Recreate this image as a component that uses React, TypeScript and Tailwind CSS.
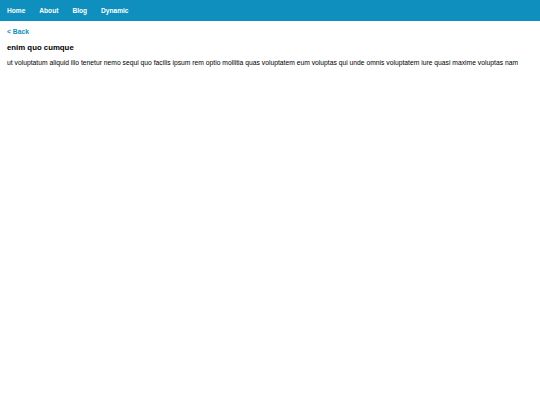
export default function App() {
  const links = ["Home", "About", "Blog", "Dynamic"];
  return (
    <div className="min-h-[405px] bg-white font-['Liberation_Sans',Arial,sans-serif]">
      <nav className="flex h-[21px] items-center gap-[14px] bg-[#0e8fbd] px-[7px]">
        {links.map((l) => (
          <a key={l} href="#" className="text-[6.6px] font-bold text-white">
            {l}
          </a>
        ))}
      </nav>
      <div className="px-[7px] pt-[6px]">
        <a href="#" className="block text-[6.8px] font-bold leading-[10px] text-[#0e8fbd]">
          &lt; Back
        </a>
        <h1 className="mt-[5px] text-[7.8px] font-bold leading-[11px] text-black">enim quo cumque</h1>
        <p className="mt-[5px] text-[6.75px] leading-[9px] text-black">
          ut voluptatum aliquid illo tenetur nemo sequi quo facilis ipsum rem optio mollitia quas voluptatem eum voluptas qui unde omnis voluptatem iure quasi maxime voluptas nam
        </p>
      </div>
    </div>
  );
}
